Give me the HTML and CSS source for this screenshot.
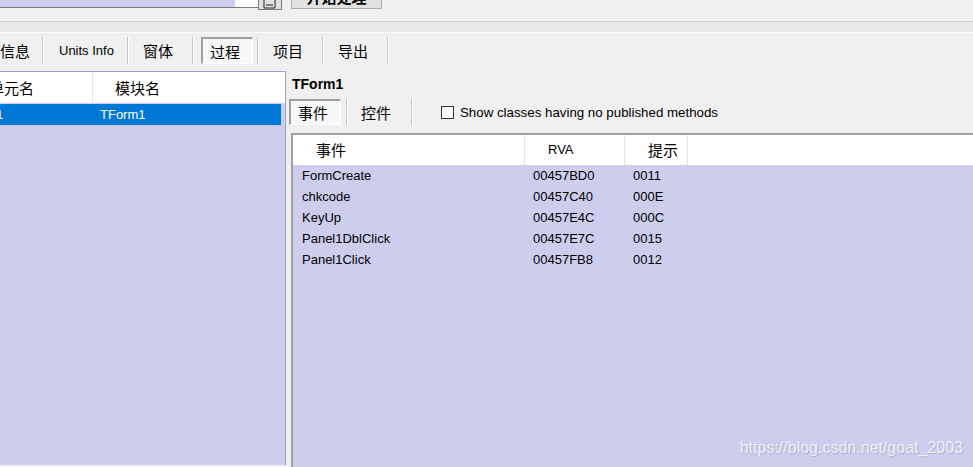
FILE: index.html
```html
<!DOCTYPE html>
<html>
<head>
  <title>DeDe - 过程</title>
  <link rel="stylesheet" href="styles.css">
</head>
<body>
  <div class="window">
    <div class="topbar">
      <div class="pathbox">
        <div class="path-fill"></div>
        <div class="path-end"></div>
      </div>
      <div class="browse">
        <svg width="14" height="12" viewBox="0 0 14 12"><path d="M1 1h9l2 2v8H1z" fill="none" stroke="#222"/><path d="M3 8h7" stroke="#222"/></svg>
      </div>
      <button class="startbtn zh">开始处理</button>
    </div>
    <div class="band"></div>

    <div class="tabs">
      <div class="tab zh first">类信息</div>
      <div class="tab wide">Units Info</div>
      <div class="tab zh">窗体</div>
      <div class="tab"><span class="pressed zh">过程</span></div>
      <div class="tab zh">项目</div>
      <div class="tab zh">导出</div>
    </div>

    <div class="main">
      <div class="left">
        <div class="list">
          <div class="lhead">
            <div class="lcol1 zh">单元名</div>
            <div class="lcol2 zh">模块名</div>
          </div>
          <div class="lrow selected">
            <div class="lcol1 cut">Unit1</div>
            <div class="lcol2">TForm1</div>
          </div>
        </div>
      </div>

      <div class="right">
        <div class="title">TForm1</div>
        <div class="subtabs">
          <div class="subtab"><span class="pressed zh">事件</span></div>
          <div class="subtab zh">控件</div>
          <label class="check"><span class="box"></span>Show classes having no published methods</label>
        </div>
        <div class="events">
          <div class="ehead">
            <div class="ec1 zh">事件</div>
            <div class="ec2">RVA</div>
            <div class="ec3 zh">提示</div>
            <div class="ec4"></div>
          </div>
          <div class="erow"><div class="ec1">FormCreate</div><div class="ec2">00457BD0</div><div class="ec3">0011</div></div>
          <div class="erow"><div class="ec1">chkcode</div><div class="ec2">00457C40</div><div class="ec3">000E</div></div>
          <div class="erow"><div class="ec1">KeyUp</div><div class="ec2">00457E4C</div><div class="ec3">000C</div></div>
          <div class="erow"><div class="ec1">Panel1DblClick</div><div class="ec2">00457E7C</div><div class="ec3">0015</div></div>
          <div class="erow"><div class="ec1">Panel1Click</div><div class="ec2">00457FB8</div><div class="ec3">0012</div></div>
        </div>
      </div>
    </div>

    <div class="watermark">https://blog.csdn.net/goat_2003</div>
  </div>
</body>
</html>
```

FILE: styles.css
```css
html, body {
  margin: 0;
  padding: 0;
}

body {
  font-family: "Liberation Sans", "Noto Sans CJK SC", sans-serif;
  font-size: 13px;
  color: #000;
  background-color: #f0f0f0;
}

.zh {
  font-family: "Noto Sans CJK SC", sans-serif;
  font-size: 15px;
}

.window {
  position: relative;
  width: 973px;
  height: 467px;
  overflow: hidden;
}

/* top strip, cut off by the screenshot */
.topbar {
  display: flex;
  align-items: flex-end;
  height: 21px;
}

.pathbox {
  display: flex;
  height: 20px;
  margin-top: -12px;
  margin-bottom: 13px;
  border-bottom: 1px solid #7a7a7a;
}

.path-fill {
  width: 235px;
  background-color: #cdcdee;
}

.path-end {
  width: 23px;
  background-color: #fff;
}

.browse {
  width: 22px;
  height: 20px;
  margin-top: -10px;
  margin-bottom: 11px;
  border: 1px solid #7a7a7a;
  background-color: #e1e1e1;
  display: flex;
  align-items: flex-end;
  justify-content: center;
}

.startbtn {
  width: 91px;
  height: 24px;
  margin: -14px 0 12px 9px;
  padding: 0;
  border: 1px solid #adadad;
  background-color: #e1e1e1;
  font-weight: bold;
  line-height: 20px;
}

.band {
  height: 10px;
  border-top: 1px solid #d0d0d0;
  border-bottom: 1px solid #fafafa;
  background-color: #e9e9e9;
}

/* main tabs */
.tabs {
  display: flex;
  height: 27px;
  margin-top: 4px;
}

.tab {
  display: flex;
  align-items: center;
  width: 49px;
  padding-left: 14px;
  border-right: 1px solid #c6c6c6;
  box-shadow: 1px 0 0 #fff;
  margin-right: 1px;
  white-space: nowrap;
}

.tab.first {
  width: 57px;
  margin-left: -15px;
  padding-left: 0;
}

.tab.wide {
  width: 68px;
  padding-left: 15px;
}

.pressed {
  display: block;
  margin-left: -7px;
  padding: 1px 7px 0 7px;
  width: 35px;
  height: 23px;
  line-height: 23px;
  border-top: 2px solid #a0a0a0;
  border-left: 2px solid #a0a0a0;
  border-bottom: 1px solid #fff;
  border-right: 1px solid #fff;
  background-color: #f7f7f7;
}

/* panels */
.main {
  display: flex;
  height: 399px;
  margin-top: 4px;
}

.left {
  width: 286px;
  padding-top: 3px;
}

.list {
  height: 393px;
  border-top: 1px solid #a0a0b8;
  border-right: 1px solid #a0a0b8;
  background-color: #cdcdee;
  overflow: hidden;
}

.lhead {
  display: flex;
  height: 31px;
  align-items: center;
  background-color: #fff;
  margin-bottom: 1px;
}

.lcol1 {
  width: 92px;
  text-indent: -11px;
  white-space: nowrap;
  overflow: hidden;
}

.lhead .lcol1 {
  border-right: 1px solid #e5e5e5;
  height: 31px;
  line-height: 31px;
}

.lhead .lcol2 {
  padding-left: 22px;
}

.lrow {
  display: flex;
  width: 281px;
  height: 21px;
  line-height: 21px;
}

.lrow .lcol1 {
  text-indent: -27px;
}

.lrow .lcol2 {
  padding-left: 8px;
}

.selected {
  background-color: #0078d7;
  color: #fff;
}

.right {
  flex: 1;
  display: flex;
  flex-direction: column;
}

.title {
  font-weight: bold;
  font-size: 14px;
  height: 20px;
  line-height: 20px;
  padding-left: 6px;
  margin-top: 6px;
}

.subtabs {
  display: flex;
  align-items: center;
  height: 28px;
  margin-top: 4px;
}

.subtab {
  display: flex;
  align-items: center;
  width: 49px;
  height: 28px;
  padding-left: 9px;
  border-right: 1px solid #c6c6c6;
  box-shadow: 1px 0 0 #fff;
  margin-right: 1px;
}

.subtab:first-child {
  width: 57px;
  padding-left: 3px;
}

.subtab:first-child .pressed {
  margin-left: 0;
  height: 22px;
  line-height: 22px;
}

.subtab + .subtab {
  width: 50px;
  padding-left: 13px;
}

.check {
  display: flex;
  align-items: center;
  margin-left: 28px;
  font-size: 13.3px;
}

.box {
  width: 11px;
  height: 11px;
  border: 1px solid #333;
  background-color: #fff;
  margin-right: 6px;
}

.events {
  flex: 1;
  margin: 7px 0 0 5px;
  border-top: 2px solid #a0a0a0;
  border-left: 2px solid #a0a0a0;
  background-color: #cdcdee;
}

.ehead {
  display: flex;
  height: 30px;
  background-color: #fff;
}

.ehead > div {
  line-height: 30px;
  padding-left: 23px;
  border-right: 1px solid #e5e5e5;
}

.ehead .ec4 {
  border-right: none;
}

.erow {
  display: flex;
  height: 21px;
  line-height: 21px;
}

.erow > div {
  padding-left: 9px;
}

.ec1 {
  width: 208px;
}

.ec2 {
  width: 76px;
}

.ec3 {
  width: 39px;
}

.erow .ec1 {
  width: 222px;
}

.erow .ec2 {
  width: 91px;
}

.watermark {
  position: absolute;
  right: 10px;
  bottom: 10px;
  font-family: "Liberation Sans", sans-serif;
  font-size: 16px;
  color: rgba(255, 255, 255, 0.75);
  text-shadow: 1px 1px 1px rgba(0, 0, 0, 0.15);
}
```
